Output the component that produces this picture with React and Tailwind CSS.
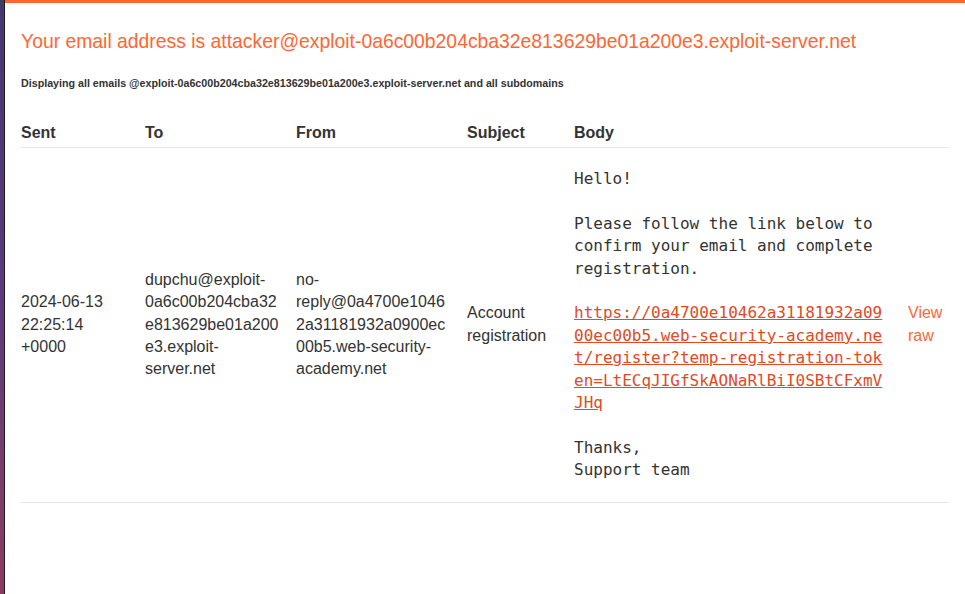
import React from "react";

const sans = { fontFamily: '"Liberation Sans", Arial, sans-serif' };

const Lines = ({ lines }) =>
  lines.map((l, i) => (
    <React.Fragment key={i}>
      {l}
      {i < lines.length - 1 && <br />}
    </React.Fragment>
  ));

const App = () => {
  return (
    <div className="flex h-[594px] w-[965px] overflow-hidden" style={sans}>
      <div className="w-[4px] bg-gradient-to-b from-[#45386c] via-[#5b3a7c] to-[#8e3c5e]" />
      <div className="w-px bg-[#1e1a22]" />
      <div className="flex-1 bg-white border-t-[3px] border-[#ff6633] px-4">
        <h1 className="mt-[26px] text-[19.35px] leading-[24px] text-[#ff6633] font-normal">
          Your email address is attacker@exploit-0a6c00b204cba32e813629be01a200e3.exploit-server.net
        </h1>
        <p className="mt-[24px] text-[10.7px] leading-[13px] font-bold text-[#333333]">
          Displaying all emails @exploit-0a6c00b204cba32e813629be01a200e3.exploit-server.net and all subdomains
        </p>
        <table className="mt-[34px] w-[928px] border-collapse table-fixed text-[#333333] text-[16px]">
          <thead>
            <tr className="border-b border-[#e6e6e6]">
              <th className="w-[124px] text-left font-bold leading-[18px] pb-[5px]">Sent</th>
              <th className="w-[151px] text-left font-bold leading-[18px] pb-[5px]">To</th>
              <th className="w-[171px] text-left font-bold leading-[18px] pb-[5px]">From</th>
              <th className="w-[107px] text-left font-bold leading-[18px] pb-[5px]">Subject</th>
              <th className="w-[334px] text-left font-bold leading-[18px] pb-[5px]">Body</th>
              <th className="text-left font-bold leading-[18px] pb-[5px]"></th>
            </tr>
          </thead>
          <tbody>
            <tr className="border-b border-[#e6e6e6] align-middle leading-[22.4px]">
              <td className="py-5 whitespace-nowrap">
                <Lines lines={["2024-06-13", "22:25:14", "+0000"]} />
              </td>
              <td className="py-5 whitespace-nowrap">
                <Lines
                  lines={[
                    "dupchu@exploit-",
                    "0a6c00b204cba32",
                    "e813629be01a200",
                    "e3.exploit-",
                    "server.net",
                  ]}
                />
              </td>
              <td className="py-5 whitespace-nowrap">
                <Lines
                  lines={[
                    "no-",
                    "reply@0a4700e1046",
                    "2a31181932a0900ec",
                    "00b5.web-security-",
                    "academy.net",
                  ]}
                />
              </td>
              <td className="py-5 whitespace-nowrap">
                <Lines lines={["Account", "registration"]} />
              </td>
              <td className="py-5">
                <div
                  className="whitespace-pre text-[16px] leading-[22.4px] text-[#333333]"
                  style={{ fontFamily: '"DejaVu Sans Mono", monospace' }}
                >
                  {"Hello!\n\nPlease follow the link below to\nconfirm your email and complete\nregistration.\n\n"}
                  <a href="#" className="underline text-[#e24a1f]">
                    {"https://0a4700e10462a31181932a09\n00ec00b5.web-security-academy.ne\nt/register?temp-registration-tok\nen=LtECqJIGfSkAONaRlBiI0SBtCFxmV\nJHq"}
                  </a>
                  {"\n\nThanks,\nSupport team"}
                </div>
              </td>
              <td className="py-5 whitespace-nowrap">
                <a href="#" className="text-[#ff6633]">
                  <Lines lines={["View", "raw"]} />
                </a>
              </td>
            </tr>
          </tbody>
        </table>
      </div>
    </div>
  );
};

export default App;
